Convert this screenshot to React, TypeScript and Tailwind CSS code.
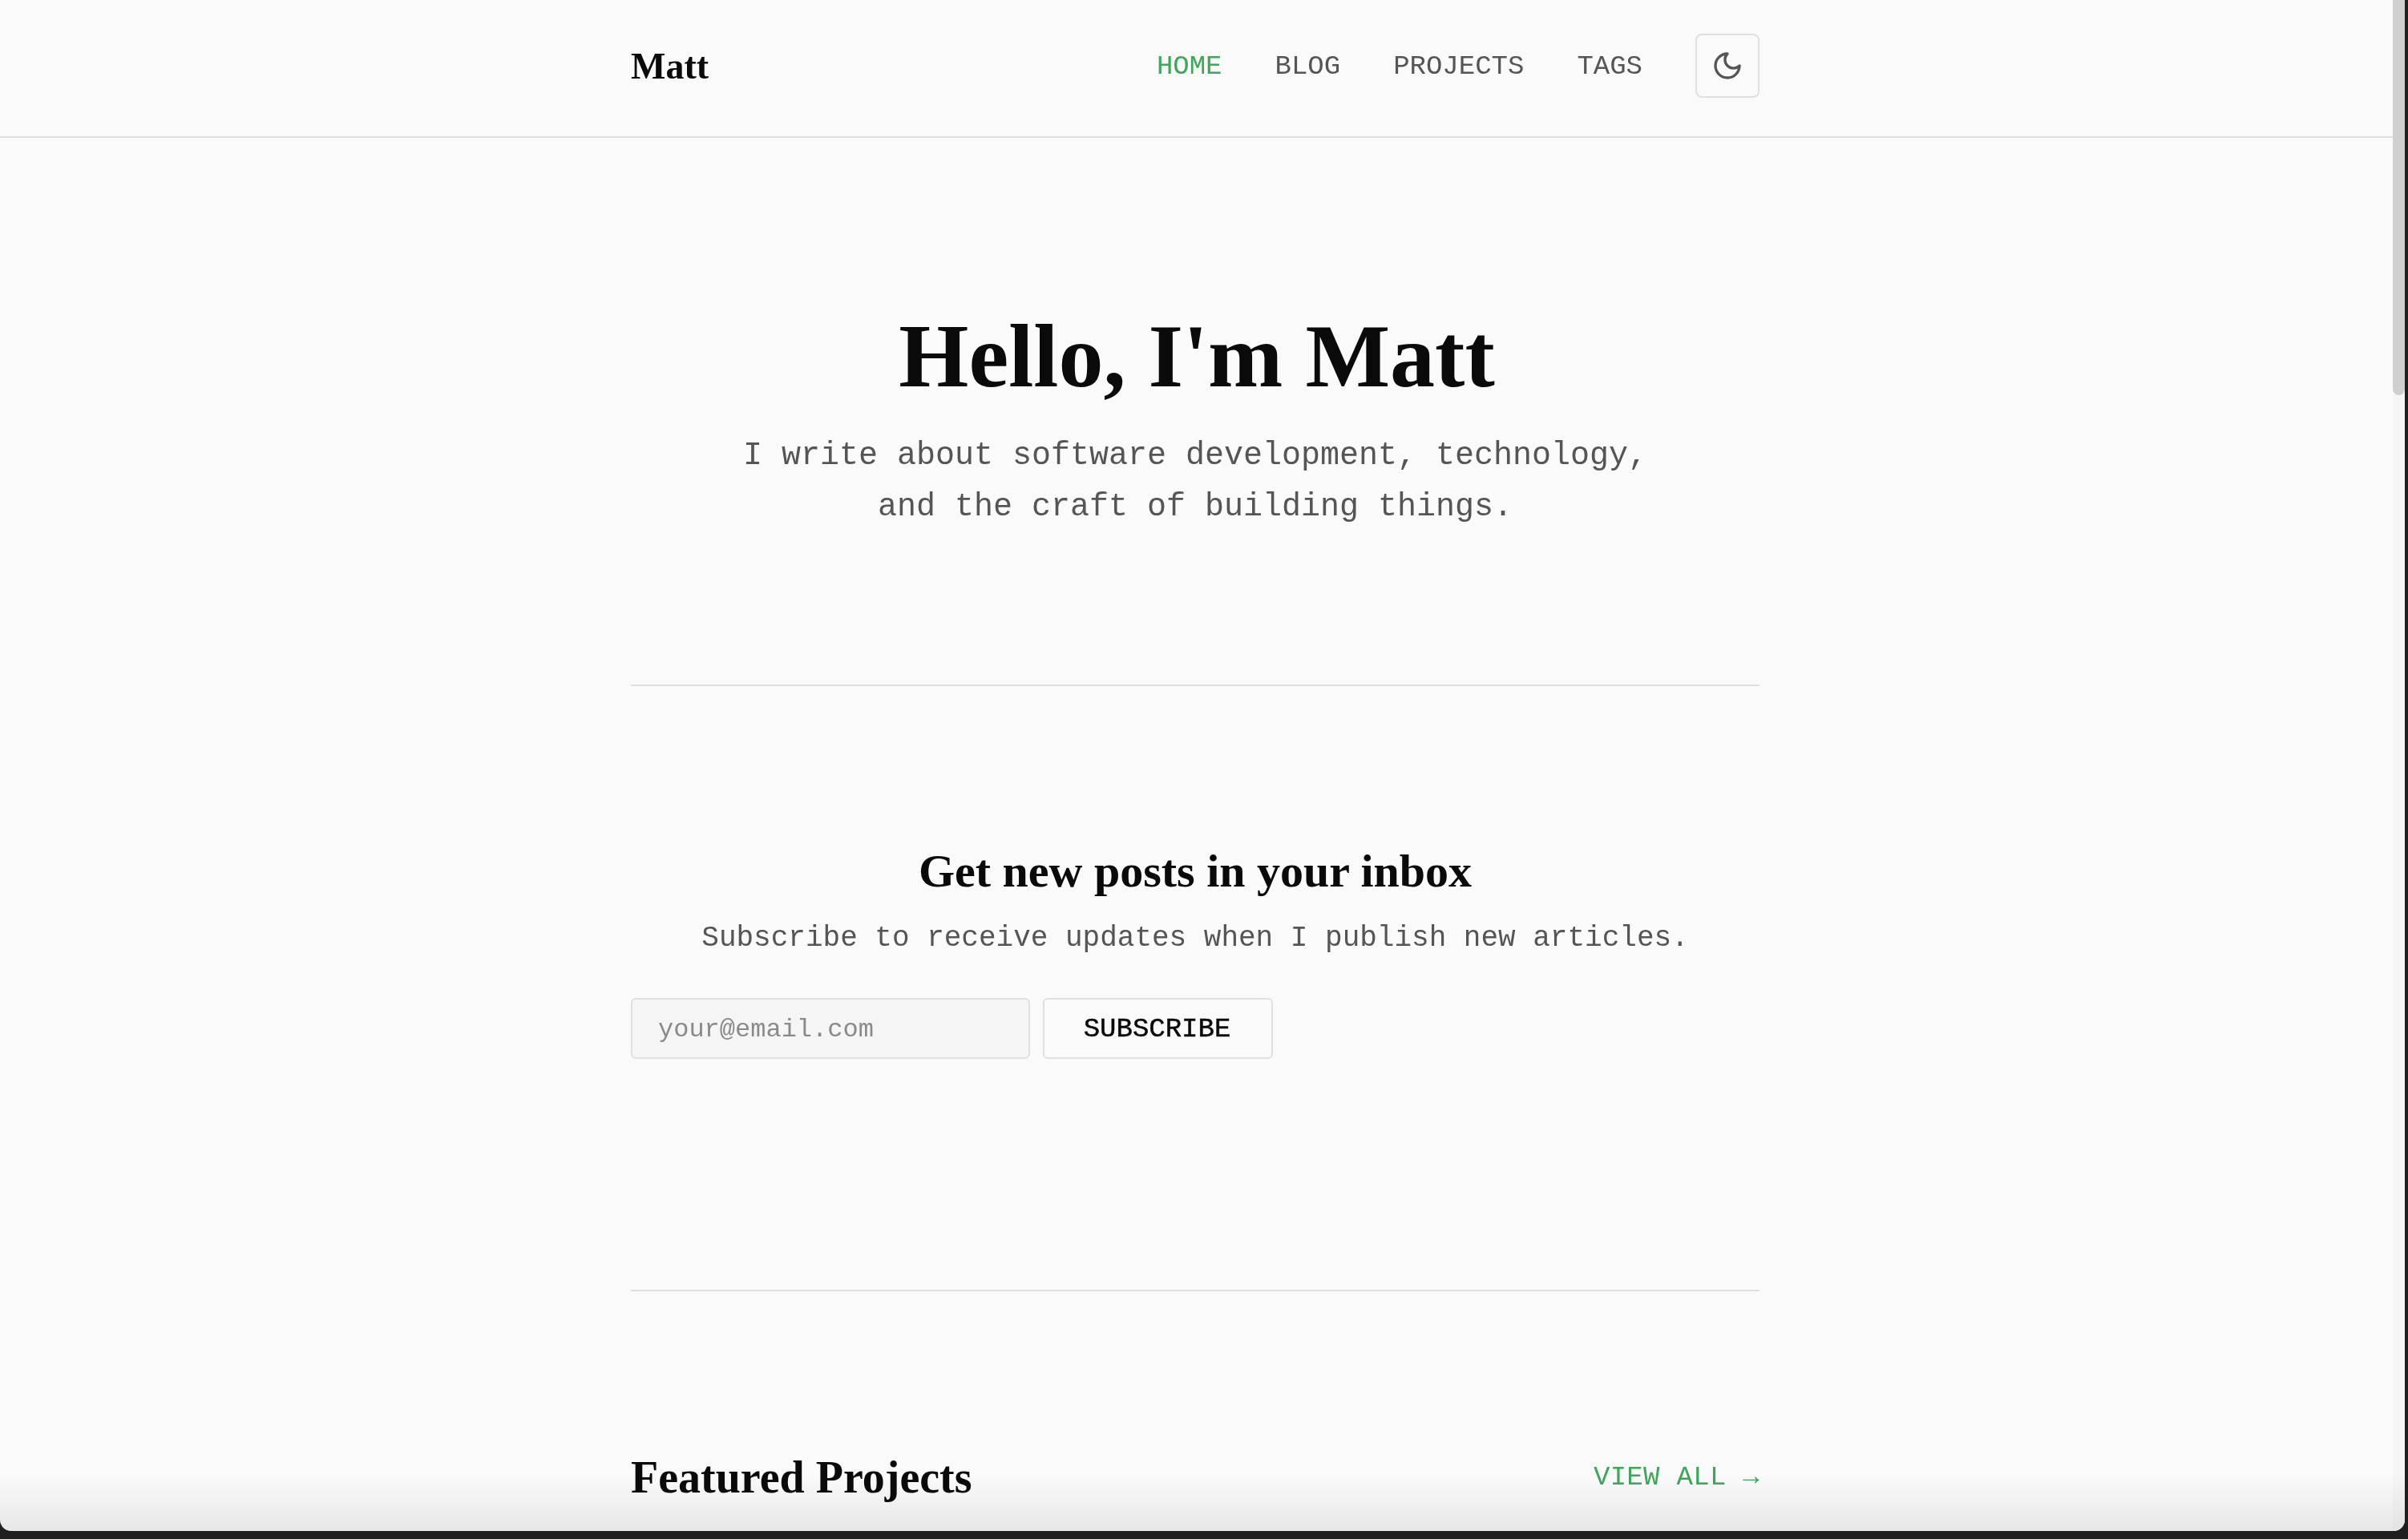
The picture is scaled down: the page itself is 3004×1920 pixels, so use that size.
const serif = "font-['Liberation_Serif',serif]";
const mono = "font-['Liberation_Mono',monospace]";

const links = [
  { label: "HOME", active: true },
  { label: "BLOG" },
  { label: "PROJECTS" },
  { label: "TAGS" },
];

function Header() {
  return (
    <header className="h-[172px] shrink-0 border-b-2 border-[#e0e0e0] pr-[3px] pb-[6px]">
      <div className="mx-auto flex h-full w-[1408px] items-center justify-between">
        <a className={`${serif} text-[46px] font-bold text-[#0a0a0a]`}>Matt</a>
        <nav className="flex items-center gap-[66px]">
          {links.map((link) => (
            <a
              key={link.label}
              className={`${mono} pt-[2px] text-[34px] ${link.active ? "text-[#3fa65a]" : "text-[#555555]"}`}
            >
              {link.label}
            </a>
          ))}
          <button className="flex h-[80px] w-[80px] items-center justify-center rounded-lg border-2 border-[#e0e0e0]">
            <svg
              width="40"
              height="40"
              viewBox="0 0 24 24"
              fill="none"
              stroke="#555555"
              strokeWidth="2"
              strokeLinecap="round"
              strokeLinejoin="round"
            >
              <path d="M12 3a6 6 0 0 0 9 9 9 9 0 1 1-9-9Z" />
            </svg>
          </button>
        </nav>
      </div>
    </header>
  );
}

export default function App() {
  return (
    <div className="h-[1920px] w-[3004px] overflow-hidden bg-[#1f1f1f]">
      <div className="relative flex h-[1910px] w-[3000px] overflow-hidden rounded-b-[14px] bg-[#fafafa]">
        <div className="flex min-w-0 flex-1 flex-col">
          <Header />
          <div className="pr-[3px]">
            <main className="mx-auto w-[1408px]">
              <section className="flex h-[684px] flex-col items-center border-b-2 border-[#e0e0e0] pt-[210px]">
                <h1 className={`${serif} pl-[4px] text-[112px] leading-[124px] font-bold text-[#0a0a0a]`}>
                  Hello, I'm Matt
                </h1>
                <p className={`${mono} mt-[31px] text-center text-[40px] leading-[64px] text-[#555555]`}>
                  I write about software development, technology,
                  <br />
                  and the craft of building things.
                </p>
              </section>
              <section className="flex h-[755px] flex-col border-b-2 border-[#e0e0e0] pt-[195px]">
                <h2 className={`${serif} text-center text-[58px] leading-[72px] font-bold text-[#0a0a0a]`}>
                  Get new posts in your inbox
                </h2>
                <p className={`${mono} mt-[24px] text-center text-[36px] leading-[48px] text-[#555555]`}>
                  Subscribe to receive updates when I publish new articles.
                </p>
                <form className="mt-[50px] flex gap-[16px]">
                  <input
                    placeholder="your@email.com"
                    className={`${mono} h-[76px] w-[498px] rounded-md border-2 border-[#e0e0e0] bg-[#f5f5f5] px-[32px] pt-[2px] text-[32px] placeholder:text-[#8a8a8a]`}
                  />
                  <button
                    type="button"
                    className={`${mono} h-[76px] w-[287px] rounded-md border-2 border-[#e0e0e0] pt-[2px] pr-[2px] text-[34px] text-[#0a0a0a] [-webkit-text-stroke:0.5px_#0a0a0a]`}
                  >
                    SUBSCRIBE
                  </button>
                </form>
              </section>
              <section className="flex items-center justify-between pt-[196px]">
                <h2 className={`${serif} text-[56px] leading-[72px] font-bold text-[#0a0a0a]`}>Featured Projects</h2>
                <a className={`${mono} text-[34px] tracking-[0.3px] text-[#3fa65a]`}>VIEW ALL →</a>
              </section>
            </main>
          </div>
        </div>
        <div className="w-[15px] shrink-0 bg-[#f5f5f5]">
          <div className="h-[493px] rounded-b-[8px] bg-[#cfcfcf]" />
        </div>
        <div className="pointer-events-none absolute inset-x-0 bottom-0 h-[70px] bg-gradient-to-t from-[#ececec] to-white mix-blend-multiply" />
      </div>
    </div>
  );
}
